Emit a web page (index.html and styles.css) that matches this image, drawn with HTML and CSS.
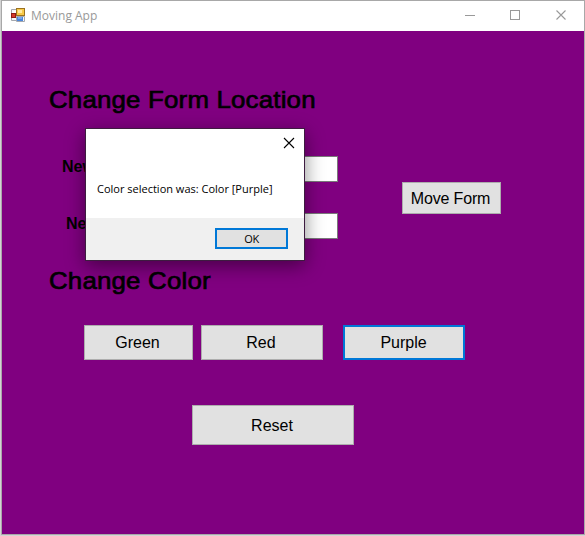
FILE: index.html
```html
<!DOCTYPE html>
<html lang="en">
<head>
<meta charset="utf-8">
<title>Moving App</title>
<link rel="stylesheet" href="styles.css">
</head>
<body>
<div class="window">
  <header class="titlebar">
    <svg class="app-icon" width="14" height="14" viewBox="0 0 14 14">
      <path d="M.5 5V1.500H5M.5 9v3.500H5M5.500 8.500h8v5h-8z" fill="#f4f7fb" stroke="#a5a8ae"/>
      <rect x="5.500" y=".5" width="8" height="7" fill="#f7c948" stroke="#9c721f"/>
      <rect x="7" y="2" width="4" height="3" fill="#ffe9a0"/>
      <rect x=".5" y="5.500" width="4" height="4" fill="#d43a2c" stroke="#8d1c16"/>
      <rect x="6" y="9" width="6" height="4" fill="#4b86dc"/>
      <rect x="7" y="9" width="4" height="2" fill="#78a9ed"/>
    </svg>
    <span class="app-title">Moving App</span>
    <svg class="controls" width="104" height="12" viewBox="0 0 104 12" fill="none" stroke="#999">
      <path d="M1 6.500h10M46.500 1.500h9v9h-9z" shape-rendering="crispEdges"/>
      <path d="M92.500 1.500l9 9M101.500 1.500l-9 9" stroke-width="1.100"/>
    </svg>
  </header>
  <main class="form">
    <h2 class="heading">Change Form Location</h2>
    <div class="location">
      <div class="fields">
        <div class="field"><label class="label">New</label><input class="input" type="text"></div>
        <div class="field"><label class="label label-y">New</label><input class="input" type="text"></div>
      </div>
      <button class="btn move">Move Form</button>
    </div>
    <h2 class="heading heading-color">Change Color</h2>
    <div class="colors">
      <button class="btn green">Green</button>
      <button class="btn red">Red</button>
      <button class="btn purple">Purple</button>
    </div>
    <button class="btn reset">Reset</button>
  </main>
</div>
<div class="dialog" role="dialog">
  <div class="dialog-body">
    <svg class="dialog-close" width="12" height="12" viewBox="0 0 12 12" stroke="#000" stroke-width="1.100"><path d="M1 1l10 10M11 1L1 11"/></svg>
    <p class="message">Color selection was: Color [Purple]</p>
  </div>
  <div class="dialog-footer"><button class="ok">OK</button></div>
</div>
</body>
</html>
```

FILE: styles.css
```css
* { box-sizing: border-box; }
body {
  margin: 0;
  width: 585px;
  height: 536px;
  overflow: hidden;
  padding: 0 0 1px 1px;
  background: #d4d4d4;
  font-family: "Liberation Sans", Arial, sans-serif;
}
.window {
  height: 535px;
  border: 1px solid #a8a8a8;
  background: #800080;
}
.titlebar {
  height: 30px;
  display: flex;
  align-items: center;
  padding: 0 17px 0 9px;
  background: #fff;
}
.app-icon { margin-top: -2px; }
.app-title {
  margin-left: 6px;
  font: 12px/16px "Open Sans", sans-serif;
  color: #999;
}
.controls { margin: -2px -1px 0 auto; }
.form { padding: 55px 0 0 47px; }
.heading {
  margin: 0;
  height: 28px;
  font-size: 24px;
  line-height: 28px;
  font-weight: 400;
  letter-spacing: 0.2px;
  -webkit-text-stroke: 0.7px #000;
  transform: scaleX(1.075);
  transform-origin: left;
  width: 260px;
  white-space: nowrap;
}
.location { display: flex; padding-top: 42px; }
.fields {
  width: 289px;
  display: flex;
  flex-direction: column;
  gap: 31px;
}
.field { display: flex; justify-content: space-between; height: 26px; }
.label {
  padding: 1px 0 0 13px;
  font-size: 16px;
  font-weight: 700;
  line-height: 20px;
}
.label-y { padding-left: 17px; }
.input {
  width: 100px;
  border: 1px solid #7a7a7a;
  background: #fff;
  outline: 0;
}
.btn {
  padding: 0 2px 0 0;
  border: 1px solid #adadad;
  border-radius: 0;
  background: #e1e1e1;
  color: #000;
  font: 16px/18px "Liberation Sans", Arial, sans-serif;
}
.move { width: 99px; height: 32px; margin: 26px 0 0 64px; padding: 1px 2px 0 0; letter-spacing: -0.15px; }
.heading-color { margin-top: 28px; }
.colors { display: flex; height: 35px; margin: 30px 0 0 35px; }
.green { width: 109px; }
.red { width: 122px; margin-left: 8px; }
.purple { width: 122px; margin-left: 20px; padding-right: 1px; border: 2px solid #0078d7; }
.reset { display: block; width: 162px; height: 40px; margin: 45px 0 0 143px; padding-top: 2px; }
.dialog {
  position: absolute;
  left: 85px;
  top: 128px;
  width: 220px;
  height: 133px;
  border: 1px solid #3d1c40;
  background: #fff;
  box-shadow: 0 5px 18px rgba(0, 0, 0, 0.45);
}
.dialog-body { height: 89px; padding: 8px 9px 0 11px; }
.dialog-close { display: block; margin-left: auto; }
.message {
  margin: 32px 0 0;
  font: 11px/16px "Open Sans", sans-serif;
  color: #000;
  white-space: nowrap;
}
.dialog-footer {
  height: 42px;
  display: flex;
  justify-content: flex-end;
  padding: 10px 16px 0 0;
  background: #f0f0f0;
}
.ok {
  width: 73px;
  height: 21px;
  padding: 0;
  border: 2px solid #0078d7;
  background: #e1e1e1;
  color: #000;
  font: 11px/16px "Open Sans", sans-serif;
  letter-spacing: -0.3px;
}
```
